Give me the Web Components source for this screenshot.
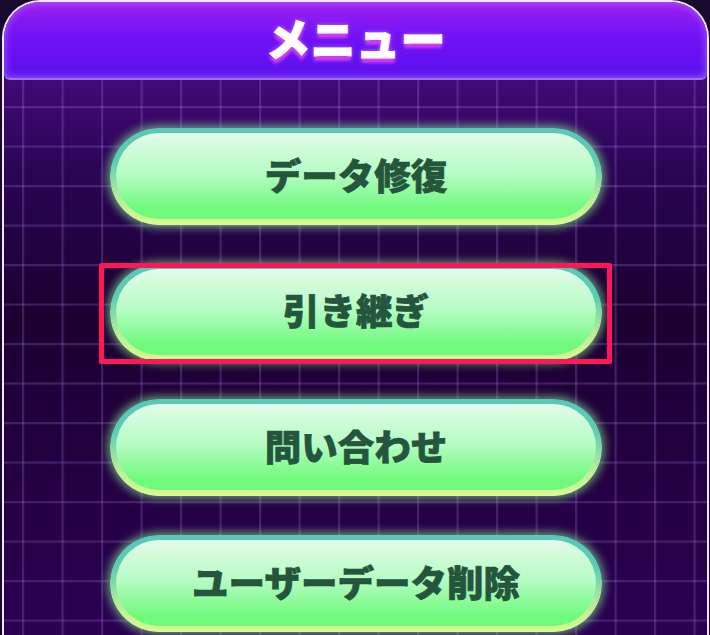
<!DOCTYPE html>
<html lang="ja">
<head>
<meta charset="utf-8">
<title>メニュー</title>
<style>
html, body { margin: 0; height: 100%; overflow: hidden; background: #170a2e; }
body { font-family: "Noto Sans CJK JP", "Noto Sans", sans-serif; }
</style>
</head>
<body>
<menu-panel heading="メニュー">
    <menu-button>データ修復</menu-button>
    <menu-button highlight>引き継ぎ</menu-button>
    <menu-button>問い合わせ</menu-button>
    <menu-button>ユーザーデータ削除</menu-button>
</menu-panel>

<script>
class MenuPanel extends HTMLElement {
    constructor() {
        super()
        this.attachShadow({ mode: 'open' }).innerHTML = `
    <style>
        :host {
            display: block;
            height: 635px;
            padding: 0 0 0 2px;
            box-sizing: border-box;
        }
        .panel {
            width: 707px;
            height: 635px;
            box-sizing: border-box;
            border: 2px solid #f4e6ff;
            border-bottom: 0;
            border-radius: 38px 38px 0 0;
            overflow: hidden;
            background:
                linear-gradient(to right, rgba(170, 120, 225, .12), rgba(170, 120, 225, .38) 1px, rgba(170, 120, 225, .12) 2px, transparent 3px) 18px 0 / 39.5px 39.5px,
                linear-gradient(to bottom, rgba(170, 120, 225, .12), rgba(170, 120, 225, .38) 1px, rgba(170, 120, 225, .12) 2px, transparent 3px) 0 25px / 39.5px 39.5px,
                linear-gradient(#400a74 80px, #2a0554 170px, #1c0030 310px, #240042 480px, #2a0052 635px);
        }
        header {
            height: 78px;
            box-sizing: border-box;
            display: flex;
            justify-content: center;
            align-items: center;
            padding-bottom: 6px;
            background: linear-gradient(#9c20ee, #7212f6 45%, #5a10ee);
            border-bottom: 2px solid #a36cf2;
            box-shadow: inset 0 0 9px rgba(205, 160, 255, .6);
            border-radius: 34px 34px 6px 6px;
            font-size: 45px;
            font-weight: 900;
            line-height: 1;
            color: #fff;
            -webkit-text-stroke: .8px #fff;
            text-shadow: 0 5px 3px #d03cf0, 0 0 5px rgba(255, 255, 255, .5);
        }
        .items {
            display: flex;
            flex-direction: column;
            gap: 38.6px;
            padding: 48px 105px 0 106px;
        }
    </style>
    <div class="panel">
        <header></header>
        <div class="items"><slot></slot></div>
    </div>
    `
    }

    connectedCallback() {
        this.shadowRoot.querySelector('header').textContent = this.getAttribute('heading')
    }
}

class MenuButton extends HTMLElement {
    constructor() {
        super()
        this.attachShadow({ mode: 'open' }).innerHTML = `
    <style>
        :host {
            display: block;
            position: relative;
            height: 97px;
        }
        .edge {
            height: 100%;
            box-sizing: border-box;
            padding: 5px 6px 6px;
            border-radius: 49px;
            background: linear-gradient(#58c8b8, #5ccdb0 35%, #b4ec9c 70%, #d8fc90);
            box-shadow: 0 0 8px 3px rgba(140, 240, 150, .6);
        }
        .face {
            height: 100%;
            display: flex;
            justify-content: center;
            align-items: center;
            padding-bottom: 2px;
            box-sizing: border-box;
            border-radius: 44px;
            background: linear-gradient(#e2fbe8, #b8fcc6 45%, #70fa7c 88%);
            font-size: 36.5px;
            font-weight: 900;
            line-height: 1;
            color: #25553d;
            -webkit-text-stroke: .7px #25553d;
        }
        .mark {
            display: none;
            position: absolute;
            left: -11px;
            right: -10px;
            top: -1px;
            bottom: -3px;
            border: 5px solid #ff1758;
            border-radius: 2px;
        }
        :host([highlight]) .mark { display: block; }
    </style>
    <div class="edge"><div class="face"><slot></slot></div></div>
    <div class="mark"></div>
    `
    }
}

customElements.define('menu-panel', MenuPanel)
customElements.define('menu-button', MenuButton)
</script>
</body>
</html>
